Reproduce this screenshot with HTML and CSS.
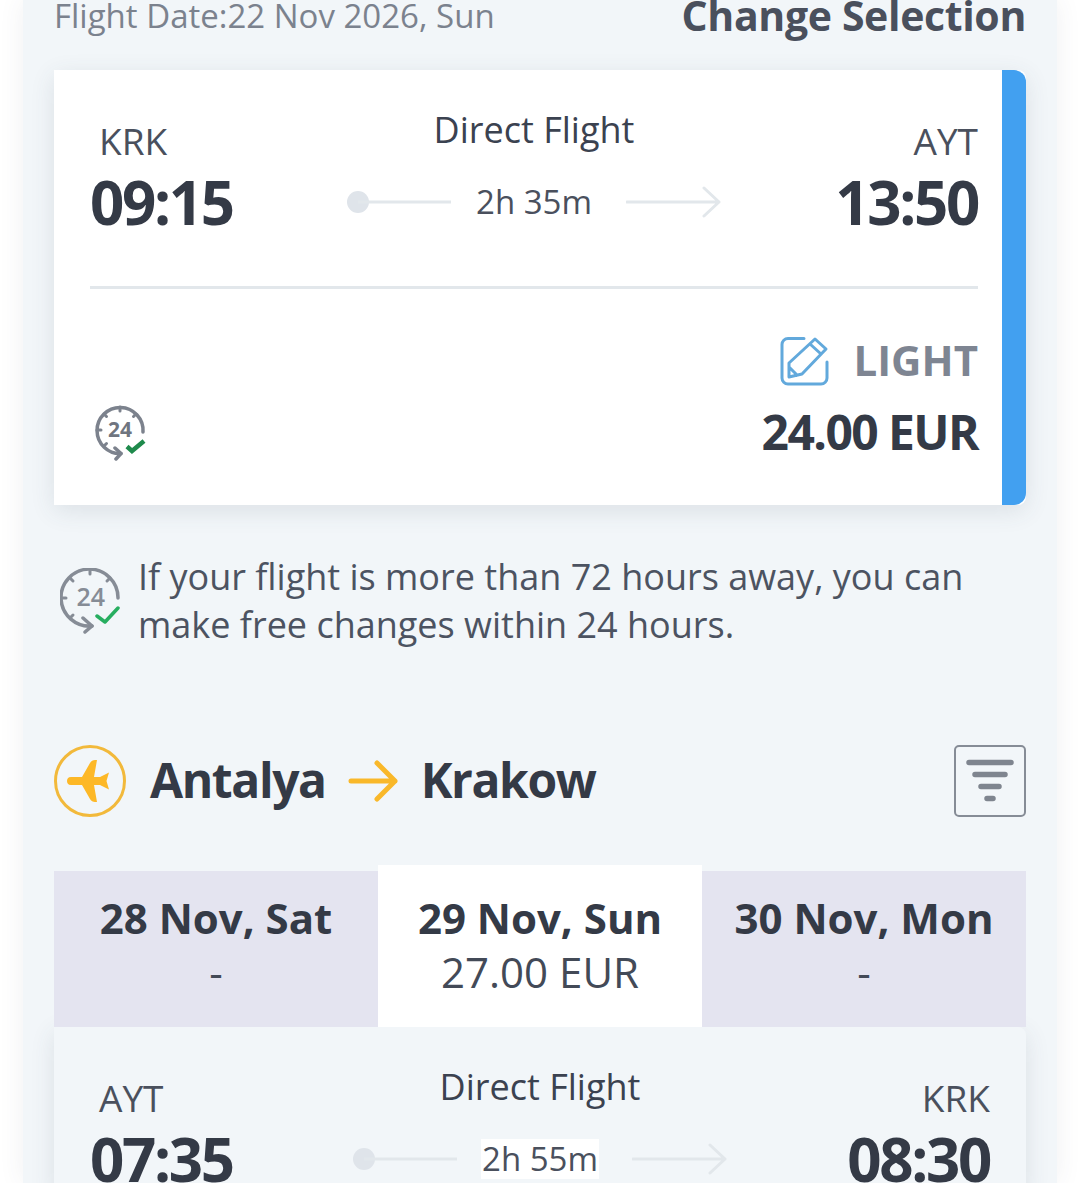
FILE: index.html
```html
<!DOCTYPE html>
<html lang="en">
<head>
<meta charset="utf-8">
<title>Flight selection</title>
<link rel="stylesheet" href="styles.css">
</head>
<body>
<main class="page">
  <header class="top">
    <span class="flight-date">Flight Date:22 Nov 2026, Sun</span>
    <span class="change">Change Selection</span>
  </header>

  <section class="card selected">
    <div class="card-body">
      <div class="route">
        <div class="end">
          <div class="code">KRK</div>
          <div class="time">09:15</div>
        </div>
        <div class="mid">
          <div class="direct">Direct Flight</div>
          <div class="duration-row">
            <svg class="line-l" width="104" height="24" viewBox="0 0 104 24"><circle cx="11" cy="12" r="11" fill="#dfe4ea"/><rect x="11" y="10.5" width="93" height="3" fill="#e2e7eb"/></svg>
            <span class="duration">2h 35m</span>
            <svg class="line-r" width="96" height="32" viewBox="0 0 96 32"><path d="M1 16H93M78 2l15 14-15 14" fill="none" stroke="#e2e7eb" stroke-width="3" stroke-linecap="round" stroke-linejoin="round"/></svg>
          </div>
        </div>
        <div class="end right">
          <div class="code">AYT</div>
          <div class="time">13:50</div>
        </div>
      </div>
      <div class="divider"></div>
      <div class="fare">
        <svg class="badge24" width="52" height="56" viewBox="0 0 52 56">
          <path d="M48 27A23 23 0 1 0 26 48.500" fill="none" stroke="#7c828d" stroke-width="3.500" stroke-linecap="round"/>
          <path d="M20 43l6 5.500-5 5.500" fill="none" stroke="#7c828d" stroke-width="3.500" stroke-linecap="round" stroke-linejoin="round"/>
          <path d="M25 2v4M9 9l2.500 2.500M2 25h4M9 41l2.500-2.500M41 9l-2.500 2.500" stroke="#7c828d" stroke-width="3" stroke-linecap="round"/>
          <text x="13" y="32" class="badge-text">24</text>
          <path d="M32 41.500l5 4.500 12-10" fill="none" stroke="#1f8a4c" stroke-width="4.500"/>
        </svg>
        <div class="fare-info">
          <div class="fare-name">
            <svg width="50" height="50" viewBox="0 0 50 50">
              <path d="M24 2.500H8a6 6 0 0 0-6 6V42a6 6 0 0 0 6 6H41a6 6 0 0 0 6-6V26" fill="none" stroke="#62a9dc" stroke-width="3" stroke-linecap="round"/>
              <path d="M35 3L46 13 22 38 9 41V27ZM30 8L41 18M9 31l9 9" fill="none" stroke="#62a9dc" stroke-width="3" stroke-linejoin="round"/>
            </svg>
            <span>LIGHT</span>
          </div>
          <div class="price">24.00 EUR</div>
        </div>
      </div>
    </div>
    <div class="stripe"></div>
  </section>

  <section class="notice">
    <svg width="60" height="66" viewBox="0 0 60 66">
      <path d="M58 30A28.500 28.500 0 1 0 32 58" fill="none" stroke="#868c96" stroke-width="3.500" stroke-linecap="round"/>
      <path d="M23 50l9 8-7 6" fill="none" stroke="#868c96" stroke-width="3.500" stroke-linecap="round" stroke-linejoin="round"/>
      <path d="M30 2v4M10 10l3 3M2 30h4M10 50l3-3M50 10l-3 3" stroke="#868c96" stroke-width="3" stroke-linecap="round"/>
      <text x="16.500" y="38" class="notice-text">24</text>
      <path d="M37 48l8 6 13-14" fill="none" stroke="#27ae60" stroke-width="3.500" stroke-linecap="round" stroke-linejoin="round"/>
    </svg>
    <p>If your flight is more than 72 hours away, you can make free changes within 24 hours.</p>
  </section>

  <section class="direction">
    <svg class="plane" width="72" height="72" viewBox="0 0 72 72">
      <circle cx="36" cy="36" r="34.500" fill="none" stroke="#f2b93b" stroke-width="3"/>
      <path d="M17 32H28L36 18C37 16 39 15 41 15H43L40 32H46L55 27.500 52.500 36 55 44.500 46 40H40L43 57H41C39 57 37 56 36 54L28 40H17C14 40 13 38 13 36S14 32 17 32Z" fill="#fdb827"/>
    </svg>
    <h2>Antalya</h2>
    <svg class="dir-arrow" width="50" height="42" viewBox="0 0 50 42"><path d="M3 21H47M29 3l18 18-18 18" fill="none" stroke="#f9b82a" stroke-width="5" stroke-linecap="round" stroke-linejoin="round"/></svg>
    <h2>Krakow</h2>
    <svg class="filter" width="72" height="72" viewBox="0 0 72 72">
      <rect x="1" y="1" width="70" height="70" rx="4" fill="none" stroke="#868c96" stroke-width="2"/>
      <path d="M15 17.500h42M21 29.500h30M27 41.500h18M33 53.500h6" stroke="#7f858f" stroke-width="5.500" stroke-linecap="round"/>
    </svg>
  </section>

  <nav class="tabs">
    <div class="tab"><strong>28 Nov, Sat</strong><span>-</span></div>
    <div class="tab active"><strong>29 Nov, Sun</strong><span>27.00 EUR</span></div>
    <div class="tab"><strong>30 Nov, Mon</strong><span>-</span></div>
  </nav>

  <section class="card result">
    <div class="route">
      <div class="end">
        <div class="code">AYT</div>
        <div class="time">07:35</div>
      </div>
      <div class="mid">
        <div class="direct">Direct Flight</div>
        <div class="duration-row">
          <svg class="line-l" width="104" height="24" viewBox="0 0 104 24"><circle cx="11" cy="12" r="11" fill="#dfe4ea"/><rect x="11" y="10.5" width="93" height="3" fill="#e2e7eb"/></svg>
          <span class="duration white">2h 55m</span>
          <svg class="line-r" width="96" height="32" viewBox="0 0 96 32"><path d="M1 16H93M78 2l15 14-15 14" fill="none" stroke="#e2e7eb" stroke-width="3" stroke-linecap="round" stroke-linejoin="round"/></svg>
        </div>
      </div>
      <div class="end right">
        <div class="code">KRK</div>
        <div class="time">08:30</div>
      </div>
    </div>
  </section>
</main>
</body>
</html>
```

FILE: styles.css
```css
* { box-sizing: border-box; }
html, body { margin: 0; height: 100%; overflow: hidden; background: #fff; }
body { font-family: "Open Sans", "Noto Sans", sans-serif; color: #343a46; }

.page {
  width: 1034px;
  height: 1183px;
  margin: 0 23px;
  padding: 0 31px;
  background: #f2f6f9;
  box-shadow: 0 0 24px rgba(60, 70, 90, .08);
  overflow: hidden;
}

.top {
  display: flex;
  justify-content: space-between;
  align-items: flex-start;
  height: 80px;
  margin-top: -10px;
  line-height: 50px;
}
.flight-date { font-size: 33px; color: #7b828e; margin-top: 1px; }
.change { font-size: 41px; font-weight: 700; color: #4a505d; letter-spacing: -.35px; }

.card {
  display: flex;
  border-radius: 0 8px 8px 0;
  box-shadow: 0 6px 24px rgba(60, 70, 90, .12);
}
.selected { background: #fff; height: 435px; }
.card-body { flex: 1; padding: 0 24px 0 36px; min-width: 0; }
.stripe { width: 24px; background: #42a0f0; border-radius: 0 12px 12px 0; }

.route { display: flex; justify-content: space-between; align-items: flex-start; width: 100%; }
.selected .route { height: 216px; padding-top: 35px; }
.end { width: 190px; line-height: 1; }
.end.right { text-align: right; }
.code { font-size: 37px; font-weight: 500; line-height: 48px; color: #4a505d; padding: 12px 0 0 9px; }
.right .code { padding: 12px 0 0; }
.time { font-size: 60px; font-weight: 700; line-height: 72px; letter-spacing: -2.300px; margin-top: 1px; color: #343a46; }
.mid { flex: 1; display: flex; flex-direction: column; align-items: center; }
.direct { font-size: 36px; line-height: 50px; color: #3b4250; }
.duration-row { display: flex; align-items: center; height: 44px; margin-top: 25px; }
.duration { font-size: 33px; line-height: 40px; color: #4a505d; margin: 0 34px 0 25px; }
.duration.white { background: #fff; margin: 0 33px 0 24px; padding: 0 1px; }
.line-l { flex: none; margin-left: 1px; }
.line-r { flex: none; }

.divider { height: 3px; background: #e2e7eb; }
.fare { display: flex; justify-content: space-between; height: 216px; }
.badge24 { align-self: flex-start; margin-top: 116px; margin-left: 5px; }
.badge-text { font: 700 21px "Open Sans", sans-serif; fill: #6f7580; }
.notice-text { font: 600 25px "Open Sans", sans-serif; fill: #868c96; }
.fare-info { display: flex; flex-direction: column; align-items: flex-end; padding-top: 47px; }
.fare-name { display: flex; align-items: center; gap: 23px; height: 50px; margin-top: -2px; }
.fare-name svg { margin-top: 4px; }
.fare-name span { font-size: 42px; font-weight: 700; color: #7e8592; }
.price { font-size: 48px; font-weight: 700; line-height: 60px; margin-top: 18px; color: #343a46; letter-spacing: -1.600px; }

.notice { display: flex; align-items: flex-start; gap: 18px; margin: 48px 0 0 6px; height: 100px; }
.notice svg { flex: none; margin-top: 15px; }
.notice p { margin: 0; font-size: 36px; line-height: 48px; color: #4c5361; }

.direction { display: flex; align-items: center; margin-top: 92px; height: 72px; }
.direction h2 { margin: 0 0 4px; font-size: 48px; font-weight: 700; color: #343a46; letter-spacing: -1.400px; }
.plane { margin-right: 24px; }
.dir-arrow { margin: 0 23px 0 22px; }
.filter { margin-left: auto; }

.tabs { display: flex; align-items: flex-end; margin-top: 48px; height: 162px; }
.tab {
  flex: 1;
  height: 156px;
  background: #e4e4f0;
  display: flex;
  flex-direction: column;
  align-items: center;
  padding-top: 20px;
}
.tab.active { height: 162px; background: #fff; padding-top: 26px; }
.tab strong { font-size: 42px; font-weight: 700; line-height: 54px; color: #343a46; }
.tab span { font-size: 42px; line-height: 54px; color: #434a57; }

.result { background: #f2f6f9; }
.result .route { padding: 35px 36px 0 36px; }
```
